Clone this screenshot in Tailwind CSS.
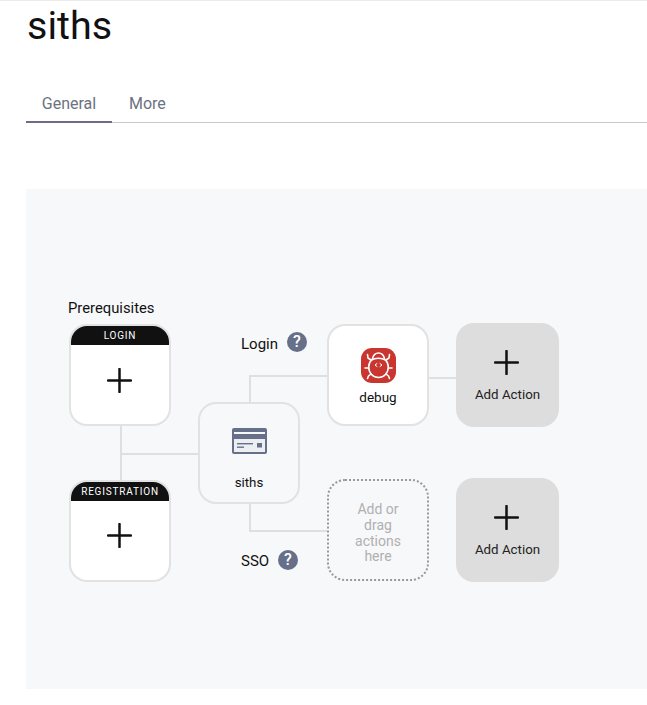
<!DOCTYPE html>
<html lang="en">
<head>
    <meta charset="UTF-8">
    <title>siths</title>
    <script src="https://cdn.jsdelivr.net/npm/@tailwindcss/browser@4"></script>
</head>
<body class="bg-white font-['Roboto',sans-serif] overflow-hidden">
    <div class="h-[705px] border-t border-[#ececec] pl-[26px]">
        <h1 class="h-[49px] text-[39.5px] leading-[49px] text-[#111] pl-px">siths</h1>

        <!-- Tabs -->
        <div class="flex mt-[36px] h-[37px] border-b border-[#c9c9cc] text-[16px] text-[#6b7280]">
            <div class="w-[86px] h-[37px] border-b-2 border-[#6c6c86] text-center leading-[36px]">General</div>
            <div class="ml-[17px] leading-[36px]">More</div>
        </div>

        <!-- Flow canvas -->
        <div class="relative mt-[66px] h-[500px] bg-[#f7f8fa]">
            <!-- Connectors -->
            <div class="absolute left-[94px] top-[236px] w-[2px] h-[56px] bg-[#dedfe0]"></div>
            <div class="absolute left-[95px] top-[264px] w-[78px] h-[2px] bg-[#dedfe0]"></div>
            <div class="absolute left-[223px] top-[186px] w-[2px] h-[28px] bg-[#dedfe0]"></div>
            <div class="absolute left-[223px] top-[186px] w-[79px] h-[2px] bg-[#dedfe0]"></div>
            <div class="absolute left-[403px] top-[188px] w-[28px] h-[2px] bg-[#dedfe0]"></div>
            <div class="absolute left-[223px] top-[314px] w-[2px] h-[28px] bg-[#dedfe0]"></div>
            <div class="absolute left-[223px] top-[341px] w-[79px] h-[2px] bg-[#dedfe0]"></div>

            <!-- Prerequisites -->
            <div class="absolute left-[42px] top-[110px] text-[14.8px] leading-[18px] text-[#111]">Prerequisites</div>

            <div class="absolute left-[43px] top-[135px] w-[102px] h-[102px] rounded-[18px] border-2 border-[#e2e2e2] bg-white overflow-hidden flex flex-col">
                <div class="h-[19px] bg-[#111] text-white text-[10px] tracking-[0.8px] leading-[20px] text-center">LOGIN</div>
                <div class="flex-1 flex items-center justify-center pb-[9px] pr-px">
                    <svg class="w-[25px] h-[25px]" viewBox="0 0 25 25" fill="none" stroke="#111" stroke-width="2.500" stroke-linecap="round"><path d="M12.500 1v23M1 12.500h23"/></svg>
                </div>
            </div>

            <div class="absolute left-[43px] top-[291px] w-[102px] h-[102px] rounded-[18px] border-2 border-[#e2e2e2] bg-white overflow-hidden flex flex-col">
                <div class="h-[19px] bg-[#111] text-white text-[10px] tracking-[0.8px] leading-[20px] text-center">REGISTRATION</div>
                <div class="flex-1 flex items-center justify-center pb-[10px] pr-px">
                    <svg class="w-[25px] h-[25px]" viewBox="0 0 25 25" fill="none" stroke="#111" stroke-width="2.500" stroke-linecap="round"><path d="M12.500 1v23M1 12.500h23"/></svg>
                </div>
            </div>

            <!-- Auth method -->
            <div class="absolute left-[172px] top-[213px] w-[102px] h-[102px] rounded-[18px] border-2 border-[#e2e2e2] bg-[#f7f8fa] flex flex-col items-center">
                <svg class="mt-[24px] w-[35px] h-[26px]" viewBox="0 0 35 26">
                    <rect width="35" height="26" rx="2" fill="#667089"/>
                    <rect x="2" y="4" width="31" height="2" fill="#f7f8fa"/>
                    <rect x="2" y="11" width="31" height="13" fill="#f7f8fa" opacity="0.92"/>
                    <rect x="5" y="15" width="16" height="1.400" fill="#667089"/>
                    <rect x="5" y="18.500" width="7" height="1.400" fill="#667089"/>
                    <rect x="25" y="15" width="5" height="4.500" fill="#667089"/>
                </svg>
                <div class="mt-[20px] text-[13.300px] leading-[18px] text-[#111]">siths</div>
            </div>

            <!-- Login flow -->
            <div class="absolute left-[215px] top-[146px] text-[15px] leading-[18px] text-[#111]">Login</div>
            <div class="absolute left-[261px] top-[143px] w-[20px] h-[20px] rounded-full bg-[#667089] text-white text-[16px] font-medium leading-[20px] text-center">?</div>

            <div class="absolute left-[301px] top-[135px] w-[102px] h-[102px] rounded-[18px] border-2 border-[#e2e2e2] bg-white flex flex-col items-center">
                <svg class="mt-[22px] w-[35px] h-[35px]" viewBox="0 0 35 35" fill="none" stroke="#fff" stroke-width="1.600" stroke-linecap="round" stroke-linejoin="round">
                    <rect width="35" height="35" rx="11" fill="#c9352f" stroke="none"/>
                    <path d="M11.500 10.500c1-4 3.300-5.500 6-5.500s5 1.500 6 5.500"/>
                    <path d="M10.500 12c-2 2-2.800 4.500-2.800 7 0 6 4.300 10.500 9.800 10.500s9.800-4.500 9.800-10.500c0-2.500-.8-5-2.800-7-2-1.300-4.300-1.800-7-1.800s-5 .5-7 1.800z"/>
                    <path d="M10 12 7 10 6.500 6.500M25 12l3-2 .5-3.500M7.700 20H4M27.300 20H31M10 26l-2.500 2-1 2.500M25 26l2.500 2 1 2.500"/>
                    <path d="M16 15.500l-2 1.500 2 1.500M19 15.500l2 1.500-2 1.500" stroke-width="1"/>
                </svg>
                <div class="mt-[5px] text-[13.500px] leading-[18px] text-[#111]">debug</div>
            </div>

            <div class="absolute left-[430px] top-[134px] w-[103px] h-[104px] rounded-[18px] bg-[#dddddd] flex flex-col items-center">
                <svg class="mt-[27px] -ml-[2px] w-[25px] h-[25px]" viewBox="0 0 25 25" fill="none" stroke="#111" stroke-width="2.500" stroke-linecap="round"><path d="M12.500 1v23M1 12.500h23"/></svg>
                <div class="mt-[11px] text-[13.300px] leading-[18px] text-[#222]">Add Action</div>
            </div>

            <!-- SSO flow -->
            <div class="absolute left-[215px] top-[363px] text-[15px] leading-[18px] text-[#111]">SSO</div>
            <div class="absolute left-[252px] top-[361px] w-[20px] h-[20px] rounded-full bg-[#667089] text-white text-[16px] font-medium leading-[20px] text-center">?</div>

            <div class="absolute left-[301px] top-[290px] w-[102px] h-[102px] rounded-[18px] border-2 border-dotted border-[#9a9a9a] bg-[#f7f8fa] flex items-center justify-center pt-[7px]">
                <div class="w-[64px] text-center text-[14px] leading-[15.700px] text-[#b0b0b0]">Add or drag actions here</div>
            </div>

            <div class="absolute left-[430px] top-[289px] w-[103px] h-[104px] rounded-[18px] bg-[#dddddd] flex flex-col items-center">
                <svg class="mt-[27px] -ml-[2px] w-[25px] h-[25px]" viewBox="0 0 25 25" fill="none" stroke="#111" stroke-width="2.500" stroke-linecap="round"><path d="M12.500 1v23M1 12.500h23"/></svg>
                <div class="mt-[11px] text-[13.300px] leading-[18px] text-[#222]">Add Action</div>
            </div>
        </div>
    </div>
</body>
</html>
